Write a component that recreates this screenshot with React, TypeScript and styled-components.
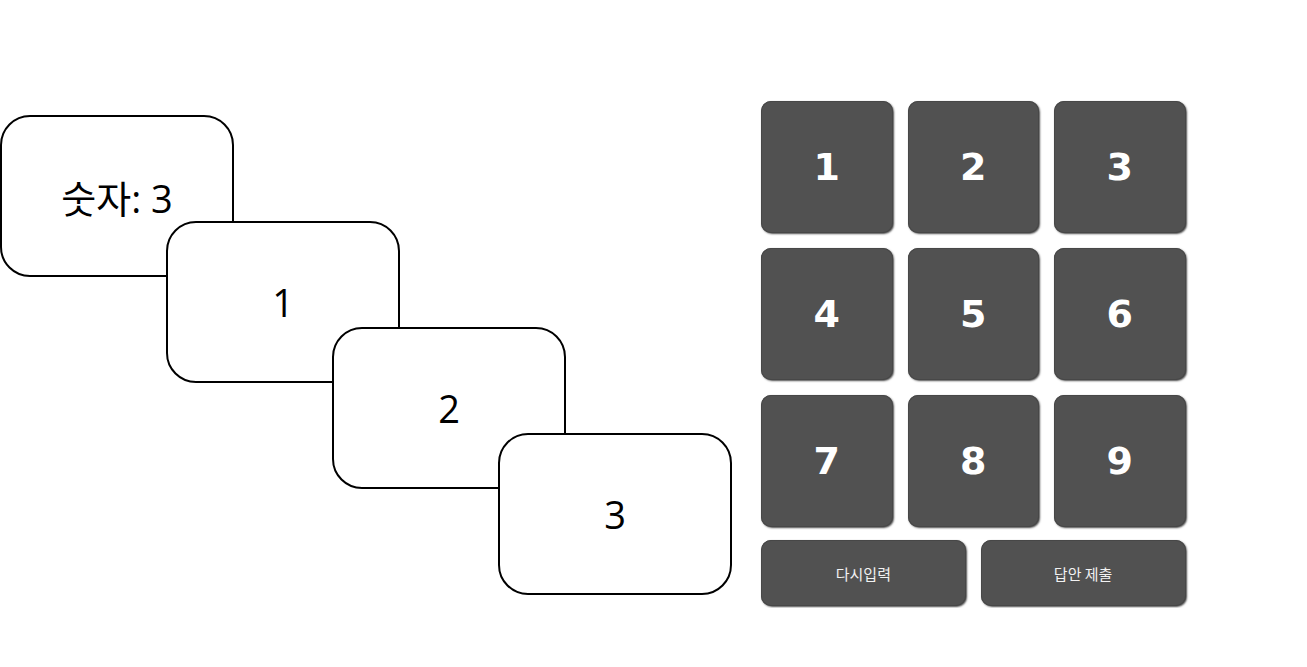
import React from "react";
import styled, { createGlobalStyle } from "styled-components";

const Global = createGlobalStyle`
  html, body { margin: 0; padding: 0; background: #fff; }
  body { font-family: "Open Sans", "Noto Sans CJK KR", sans-serif; }
`;

const Page = styled.div`
  display: flex;
  flex-direction: row;
  align-items: flex-start;
  gap: 29px;
  padding-top: 101px;
`;

const Cards = styled.div`
  display: flex;
  flex-direction: column;
  width: 732px;
  padding-top: 14px;
`;

const Card = styled.div<{ $step: number }>`
  box-sizing: border-box;
  width: 234px;
  height: 162px;
  margin-left: ${(p) => p.$step * 166}px;
  margin-top: ${(p) => (p.$step === 0 ? 0 : -56)}px;
  border: 2px solid #000;
  border-radius: 30px;
  background: #fff;
  display: flex;
  align-items: center;
  justify-content: center;
  font-family: "Open Sans", "Noto Sans CJK KR", sans-serif;
  font-size: 38px;
  color: #000;
  position: relative;
  z-index: ${(p) => p.$step};
`;

const Pad = styled.div`
  display: grid;
  grid-template-columns: repeat(3, 131.5px);
  grid-template-rows: repeat(3, 132px) 66px;
  column-gap: 15px;
  row-gap: 15px;
`;

const Key = styled.button`
  box-sizing: border-box;
  border: none;
  border-radius: 10px;
  background: #515151;
  box-shadow: 1px 1px 2px rgba(0, 0, 0, 0.7), inset 0 0 0 1px #474747;
  color: #fff;
  font-family: "DejaVu Sans", "Liberation Sans", sans-serif;
  font-weight: 900;
  font-size: 38px;
  padding: 0;
  cursor: pointer;
  display: flex;
  align-items: center;
  justify-content: center;
`;

const ActionRow = styled.div`
  grid-column: 1 / span 3;
  display: grid;
  grid-template-columns: 1fr 1fr;
  gap: 15px;
  height: 66px;
  margin-top: -2px;
`;

const Action = styled(Key)`
  font-family: "Noto Sans CJK KR", "Open Sans", sans-serif;
  font-weight: 400;
  font-size: 15px;
  color: #f2f2f2;
  height: 66px;
`;

export default function App() {
  const cards = ["숫자: 3", "1", "2", "3"];
  const keys = [1, 2, 3, 4, 5, 6, 7, 8, 9];
  return (
    <>
      <Global />
      <Page>
        <Cards>
          {cards.map((c, i) => (
            <Card key={i} $step={i}>
              {c}
            </Card>
          ))}
        </Cards>
        <Pad>
          {keys.map((k) => (
            <Key key={k}>{k}</Key>
          ))}
          <ActionRow>
            <Action>다시입력</Action>
            <Action>답안 제출</Action>
          </ActionRow>
        </Pad>
      </Page>
    </>
  );
}
